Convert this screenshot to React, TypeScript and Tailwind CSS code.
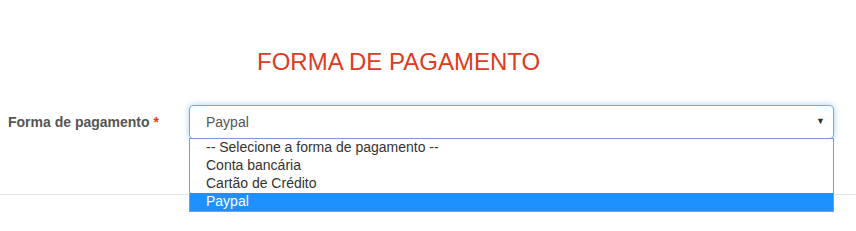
export default function App() {
  const opts = ["-- Selecione a forma de pagamento --", "Conta bancária", "Cartão de Crédito", "Paypal"];
  return (
    <div className="relative w-[856px] h-[231px] bg-white overflow-hidden" style={{ fontFamily: '"Liberation Sans", Arial, sans-serif' }}>
      <div className="pt-[48px] pl-[257px] h-[105px]">
        <h2 className="text-[24px] leading-[28px] text-[#dd3b23] font-normal">FORMA DE PAGAMENTO</h2>
      </div>
      <div className="flex items-start">
        <label className="w-[189px] pl-[8px] pt-[9px] text-[14px] leading-[17px] font-bold text-[#555]">
          Forma de pagamento <span className="text-[#dd3b23]">*</span>
        </label>
        <div className="relative w-[645px]">
          <div className="h-[34px] rounded-[4px] border border-[#66afe9] shadow-[0_0_6px_rgba(102,175,233,0.6)] flex items-center justify-between pl-[16px] pr-[8px] text-[14px] text-[#555]">
            <span>Paypal</span>
            <span className="text-[9px] text-[#333]">▼</span>
          </div>
          <div className="absolute left-0 right-0 top-[33px] z-10 border border-[#7a9cd3] bg-white">
            {opts.map((o, i) => (
              <div key={o} className={`h-[18px] leading-[17px] pl-[16px] text-[14px] ${i === 3 ? "bg-[#1e90ff] text-white" : "text-[#333]"}`}>{o}</div>
            ))}
          </div>
        </div>
      </div>
      <div className="mt-[55px] border-t border-[#e5e5e5] w-full" />
    </div>
  );
}
